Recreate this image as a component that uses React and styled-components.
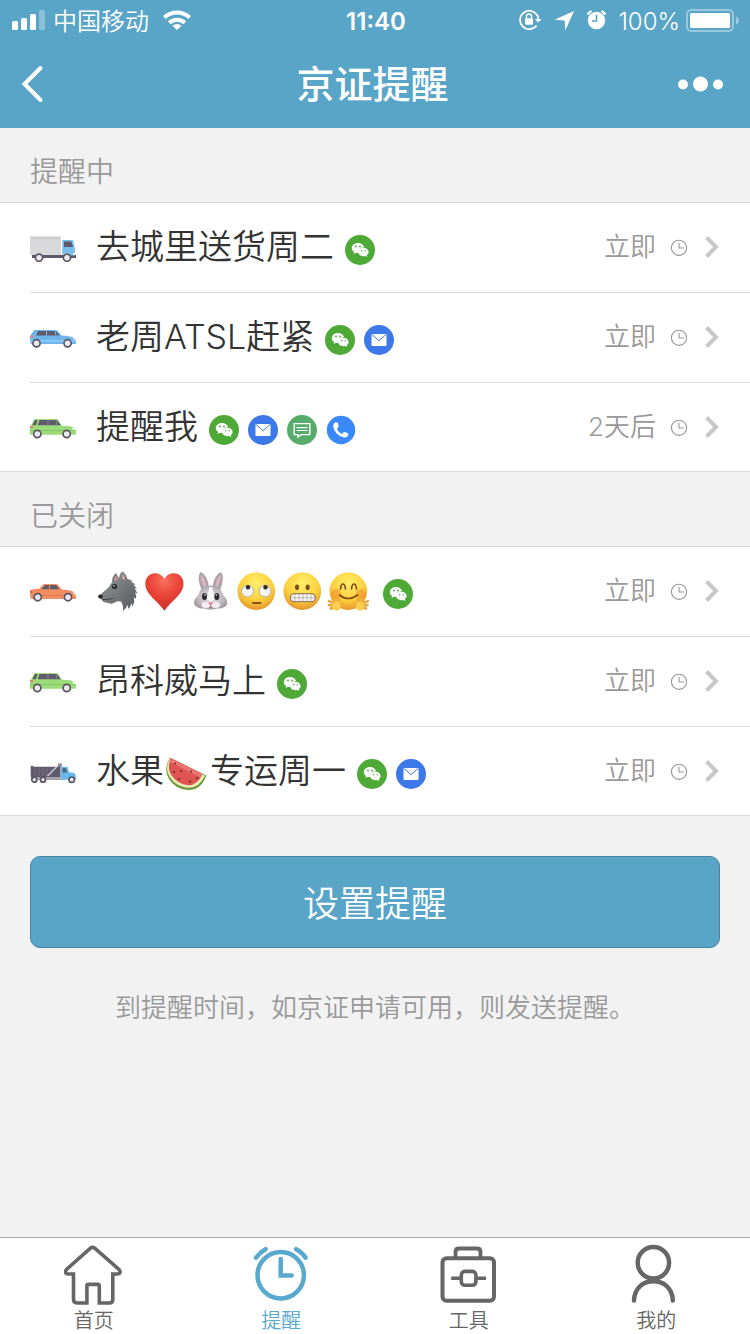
import React from 'react';
import styled, { createGlobalStyle } from 'styled-components';

const reminders = [
  {
    title: '提醒中',
    items: [
      { vehicle: 'van', name: ['去城里送货周二'], channels: ['wechat'], when: '立即' },
      { vehicle: 'blueCar', name: ['老周ATSL赶紧'], channels: ['wechat', 'mail'], when: '立即' },
      { vehicle: 'greenCar', name: ['提醒我'], channels: ['wechat', 'mail', 'sms', 'phone'], when: '2天后' },
    ],
  },
  {
    title: '已关闭',
    items: [
      {
        vehicle: 'orangeCar',
        name: [':wolf', ':heart', ':rabbit', ':rolling', ':grimace', ':hug'],
        channels: ['wechat'],
        when: '立即',
      },
      { vehicle: 'greenCar', name: ['昂科威马上'], channels: ['wechat'], when: '立即' },
      { vehicle: 'dumpTruck', name: ['水果', ':melon', '专运周一'], channels: ['wechat', 'mail'], when: '立即' },
    ],
  },
];

const App = () => {
  return (
    <Page>
      <GlobalStyle />
      <Header>
        <StatusBar />
        <NavBar>
          <NavButton aria-label="返回">
            <svg width="24" height="40" viewBox="0 0 24 40">
              <path d="M19.500 4L3.500 20l16 16" fill="none" stroke="#fff" strokeWidth="4" strokeLinecap="round" />
            </svg>
          </NavButton>
          <NavTitle>京证提醒</NavTitle>
          <NavButton aria-label="更多">
            <svg width="46" height="16" viewBox="0 0 46 16" fill="#fff">
              <circle cx="5" cy="8.500" r="5" />
              <circle cx="22.500" cy="8" r="7.500" />
              <circle cx="40" cy="8.500" r="5" />
            </svg>
          </NavButton>
        </NavBar>
      </Header>

      <Main>
        {reminders.map((group) => (
          <section key={group.title}>
            <GroupTitle>{group.title}</GroupTitle>
            <List>
              {group.items.map((item, index) => (
                <ReminderRow key={index} {...item} />
              ))}
            </List>
          </section>
        ))}
        <SubmitButton>设置提醒</SubmitButton>
        <Note>到提醒时间，如京证申请可用，则发送提醒。</Note>
      </Main>

      <TabBar>
        {tabs.map(({ label, icon, active }) => (
          <TabLink key={label} href="#" $active={active}>
            <svg width="60" height="62" viewBox="0 0 60 62" fill="none" stroke="currentColor" strokeWidth="4.500">
              {icon}
            </svg>
            {label}
          </TabLink>
        ))}
      </TabBar>
    </Page>
  );
};

export default App;

const ReminderRow = ({ vehicle, name, channels, when }) => (
  <Row>
    <svg width="46" height="30" viewBox="0 -1 46 30">{vehicles[vehicle]}</svg>
    <Name>
      {name.map((part, index) =>
        part.startsWith(':') ? (
          <Emoji key={index} viewBox="0 0 42 42">{emojis[part.slice(1)]}</Emoji>
        ) : (
          <span key={index}>{part}</span>
        )
      )}
    </Name>
    <Channels>
      {channels.map((channel) => (
        <svg key={channel} width="30" height="30" viewBox="0 0 30 30">{channelIcons[channel]}</svg>
      ))}
    </Channels>
    <When>{when}</When>
    <svg width="18" height="18" viewBox="0 0 18 18" fill="none" stroke="#999" strokeWidth="1.100">
      <circle cx="9" cy="9.800" r="7.600" />
      <path d="M9 5v5h5" />
    </svg>
    <Chevron width="16" height="24" viewBox="0 0 16 24" fill="none" stroke="#c7c7cc" strokeWidth="4">
      <path d="M2.500 2.500L12 12l-9.500 9.500" />
    </Chevron>
  </Row>
);

const StatusBar = () => (
  <StatusRow>
    <StatusSide>
      <svg width="34" height="20" viewBox="0 0 34 20" fill="#fff">
        <rect x="0" y="11" width="6" height="9" rx="1.500" />
        <rect x="9" y="8" width="6" height="12" rx="1.500" />
        <rect x="18" y="4" width="6" height="16" rx="1.500" />
        <rect x="27" y="0" width="6" height="20" rx="1.500" opacity="0.300" />
      </svg>
      <StatusText>中国移动</StatusText>
      <Wifi width="28" height="20" viewBox="0 0 28 20" fill="none" stroke="#fff" strokeWidth="4">
        <path d="M1.300 7.500a18.500 18.500 0 0 1 25.400 0" />
        <path d="M6.200 12.700a11.500 11.500 0 0 1 15.600 0" />
        <path d="M14 20l-4.600-4.300q4.600-3.600 9.200 0z" fill="#fff" stroke="none" />
      </Wifi>
    </StatusSide>
    <Clock>11:40</Clock>
    <StatusSide $end>
      <svg width="88" height="22" viewBox="0 0 88 22">
        <g fill="none" stroke="#fff" strokeWidth="1.700">
          <path d="M18.800 7.500A9.200 9.200 0 1 0 17.600 16.500" />
          <path d="M18.600 6.500q.7 1.800.7 4" />
          <path d="M7.400 10V7.700a2.600 2.600 0 0 1 5.200 0V10" strokeWidth="1.500" />
        </g>
        <path d="M15.800 10h6.800l-3.400 3.600z" fill="#fff" />
        <rect x="6" y="9.300" width="8" height="6.500" rx="1" fill="#fff" />
        <path d="M55 2L46.300 21.500 45.600 11.500 35.500 10.800z" fill="#fff" />
        <circle cx="77.500" cy="11.500" r="8.700" fill="#fff" />
        <path d="M68.500 5.500A12 12 0 0 1 72.500 2M82.500 2a12 12 0 0 1 4 3.500" stroke="#fff" strokeWidth="2.400" fill="none" />
        <path d="M77.500 6v6H73" fill="none" stroke="#58a5c8" strokeWidth="1.600" />
      </svg>
      <Battery>
        <StatusText>100%</StatusText>
        <svg width="54" height="24" viewBox="0 0 54 24">
          <rect x="1" y="2" width="46" height="21" rx="4.500" fill="none" stroke="#fff" strokeWidth="2" opacity="0.400" />
          <rect x="4" y="5" width="40" height="15" rx="1.500" fill="#fff" />
          <path d="M50 8.500q3 1 3 4t-3 4z" fill="#fff" opacity="0.400" />
        </svg>
      </Battery>
    </StatusSide>
  </StatusRow>
);

const Wheel = ({ x, y, r = 3.6 }) => (
  <circle cx={x} cy={y} r={r} fill="#eceaf0" stroke="#5b5564" strokeWidth="1.700" />
);

const vehicles = {
  van: (
    <>
      <rect y="3" width="31" height="19" fill="#d9d8da" />
      <path d="M2 5.500h27" stroke="#c4c3c6" />
      <path d="M2 22h44v3H2z" fill="#5f586a" />
      <path d="M32.300 7H42q1 0 1.300 1L45 16v6.500h-4a5 5 0 0 0-8.700 0z" fill="#79bdeb" />
      <path d="M34 8.500h7.200L43 14H34z" fill="#5f586a" />
      <path d="M43 20h2.500v2H43z" fill="#eaf5fd" />
      <Wheel x={9} y={24.7} />
      <Wheel x={37} y={24.7} />
    </>
  ),
  blueCar: (
    <>
      <path d="M0 13L4.300 7h21q2 0 3.200 1.800L31.500 12.500q10 .5 13 2.500 1.500 1 1.500 6H1.500Q0 20 0 17z" fill="#6fb5ea" />
      <path d="M6 12.500L8 8h17q1.500 0 4.500 4.500z" fill="#5f5a6c" />
      <path d="M16.500 8v4.500M25 8l1 4.500" stroke="#79bdeb" />
      <path d="M0 18h46" stroke="#8fd0f7" strokeWidth="1.500" />
      <path d="M0 12.500h3v2H0z" fill="#ef7d73" />
      <path d="M42 15h3l.5 2z" fill="#eaf5fd" />
      <Wheel x={6.5} y={20.3} />
      <Wheel x={37.6} y={20.3} />
    </>
  ),
  greenCar: (
    <>
      <path d="M0 14.500L4 6.500q.5-.5 1.500-.5h21q1 0 1.700 1L32 12.800q9 0 12 1.700 2 1 2 7.200H0z" fill="#9bdb79" />
      <path d="M2.300 12.300L5 7h2.500l-1.500 5.300zM7.700 12.300L9.500 7H27l3.700 5.300z" fill="#5f5a6c" />
      <path d="M18 7v5.300M26 7l1 5.300" stroke="#8b8794" />
      <path d="M0 17.500h46" stroke="#80c663" />
      <path d="M0 13h3v2H0z" fill="#ef7d73" />
      <path d="M42 14.500h3l1 2.500h-3z" fill="#eefbe8" />
      <Wheel x={7.3} y={21} />
      <Wheel x={36.7} y={21} />
    </>
  ),
  orangeCar: (
    <>
      <path d="M0 13q5-1.200 9-1.200L13 7.500q.7-.5 1.500-.5H26q1.200 0 2 1l4 4.500q8 .3 12 2.500 2 1 2 7H1q-1-1-1-9z" fill="#f38e63" />
      <path d="M11.500 12.300L15 8h10.500q1 0 4 4.300z" fill="#5f5a6c" />
      <path d="M19.500 8v4.300" stroke="#f38e63" />
      <path d="M12 18.500h21" stroke="#dd7950" />
      <path d="M0 14h2.500v2H0z" fill="#e65c50" />
      <path d="M43 15h2l.7 2.500H44z" fill="#fff0e2" />
      <Wheel x={7.7} y={20.2} />
      <Wheel x={38} y={20.2} />
    </>
  ),
  dumpTruck: (
    <>
      <path d="M.7 8.700h2l1 1H28l2-3h2V20H.7z" fill="#5f5a6c" />
      <path d="M5 11v8M9 11v8M13 11v8M17 11v8M21 11v8" stroke="#77727f" />
      <path d="M1 20h32v3H1z" fill="#a5a2aa" />
      <path d="M17.500 19L29 7.500h2V22" stroke="#d0ced3" strokeWidth="1.300" fill="none" />
      <path d="M28 7.500h3.500" stroke="#86828e" strokeWidth="1.700" />
      <path d="M31 9.700h6.500l1.500 5.500q5 .3 6 1.500 1 1 1 6H31z" fill="#69b8ec" />
      <path d="M32.500 11H36l1.200 4.500h-4.700z" fill="#51677f" />
      <Wheel x={4.3} y={22.7} r={2.5} />
      <Wheel x={13} y={22.7} r={2.5} />
      <Wheel x={41.7} y={22.7} r={2.7} />
    </>
  ),
};

const channelIcons = {
  wechat: (
    <>
      <circle cx="15" cy="15" r="15" fill="#4ea936" />
      <path d="M13 8c-3.500 0-6.200 2.200-6.200 5 0 1.600.9 3 2.300 3.900L8.500 19l2.500-1.200q1.200.4 2.600.3-.6-5 5.500-6C18.500 9.700 16 8 13 8z" fill="#fff" />
      <path d="M18.400 12.700c-3 0-5.200 1.900-5.200 4.300s2.300 4.200 5.200 4.200q1 0 1.900-.3l2 1-.5-1.700c1.100-.8 1.800-1.900 1.800-3.200 0-2.400-2.300-4.300-5.200-4.300z" fill="#fff" />
      <g fill="#4ea936">
        <circle cx="11" cy="11.500" r=".9" />
        <circle cx="15" cy="11.500" r=".9" />
        <circle cx="16.700" cy="15.700" r=".7" />
        <circle cx="20.200" cy="15.700" r=".7" />
      </g>
    </>
  ),
  mail: (
    <>
      <circle cx="15" cy="15" r="15" fill="#3c78e8" />
      <rect x="7.500" y="9" width="15" height="12" rx=".7" fill="#fff" />
      <path d="M8 9.500l7 6.200 7-6.200" fill="none" stroke="#3c78e8" strokeWidth="1" />
    </>
  ),
  sms: (
    <>
      <circle cx="15" cy="15" r="15" fill="#57ac6b" />
      <path d="M7.200 8.600h15.600v11h-8.500L11 22v-2.400H7.200z" fill="none" stroke="#fff" strokeWidth="1.400" />
      <path d="M9.500 12.700h11M9.500 15.500h11" stroke="#fff" strokeWidth="1.200" />
    </>
  ),
  phone: (
    <>
      <circle cx="15" cy="15" r="14.200" fill="#3b89f8" />
      <path
        d="M9.500 7.300l1.700.2q.7.200.8 1l.6 2.700q0 .7-.5 1.200L10.800 14q1.500 3.200 5 5l1.500-1.600q.6-.5 1.300-.3l2.800.8q.8.300.9 1.200.1 1-.6 1.900-1.300 1.700-3.700 1.500-4-.5-7.300-4-3.200-3.400-3.500-7.300-.1-3 2.300-3.900z"
        fill="#fff"
      />
    </>
  ),
};

const Face = () => (
  <>
    <radialGradient id="face" cx=".5" cy=".3" r=".72">
      <stop offset="0" stopColor="#fff06a" />
      <stop offset=".6" stopColor="#fcd03e" />
      <stop offset="1" stopColor="#e2922a" />
    </radialGradient>
    <circle cx="21.300" cy="21.200" r="18.800" fill="url(#face)" />
  </>
);

const emojis = {
  wolf: (
    <>
      <linearGradient id="fur" x1="0" y1="0" x2="1" y2="1">
        <stop offset="0" stopColor="#9a9c9d" />
        <stop offset="1" stopColor="#54585a" />
      </linearGradient>
      <path d="M15 12Q15 6 19 3l5 9z" fill="#777a7b" />
      <path d="M17 11q0-4 2-5.500l3 5z" fill="#c99694" />
      <path
        d="M22 9q0-6 4-7.500Q29 4 30.500 9l5 1.500-1.500 1 4.500 3-2 .2 3.500 4-2.500-.7 3 5.500-2.500-1q2 3 .7 6.500L37 27q1 5-1.500 10l-1-4q-.5 3-3 6l-1-4q-1 3-4.500 6 .5-6-2-9.500-4-1-6 1-3 2-7 .5Q5 32 4.500 29.500L1.500 27q.5-2 3-3.500L12 17q2-6 10-8z"
        fill="url(#fur)"
      />
      <path d="M25 9q-.5-3 1.300-5Q28 6 28 10z" fill="#d3a29f" />
      <path d="M5 29.300q6 1.500 11-1.300" fill="none" stroke="#444" />
      <ellipse cx="3.500" cy="26.500" rx="2.400" ry="2" fill="#26282b" />
      <circle cx="17.500" cy="16.500" r="2.700" fill="#303336" />
      <circle cx="17" cy="15.800" r=".8" fill="#ddd" />
    </>
  ),
  heart: (
    <>
      <radialGradient id="heart" cx=".5" cy=".2" r=".8">
        <stop offset="0" stopColor="#f8705c" />
        <stop offset=".5" stopColor="#ea4437" />
        <stop offset="1" stopColor="#c92d27" />
      </radialGradient>
      <path d="M21.500 9C24 4 28 3.200 31 3.200c5.500 0 9.500 4.500 9.500 10.300 0 11-12 17-19 27.300C14.500 30.500 2.300 24.500 2.300 13.500 2.300 7.700 6.500 3.200 12 3.200c4 0 7.500 2 9.500 5.800z" fill="url(#heart)" />
    </>
  ),
  rabbit: (
    <>
      <radialGradient id="rabbit" cx=".5" cy=".5" r=".6">
        <stop offset="0" stopColor="#e9e4e8" />
        <stop offset=".6" stopColor="#c2bbc1" />
        <stop offset="1" stopColor="#978f97" />
      </radialGradient>
      <path d="M13 21Q7 7 11.500 2 19 5 20 19zM30.500 21Q36.500 7 32 2q-7.500 3-8.500 17z" fill="#aaa2a9" />
      <path d="M15.500 18Q10.500 9 12 4.500q4.500 4 5.500 13zM28 18Q33 9 31.500 4.500q-4.500 4-5.500 13z" fill="#dcb5b8" />
      <path d="M21.700 15.500c7 0 10.500 3.500 11.500 7.500 1 3.500 5 5 5 9.500 0 4.500-6 6.500-10.500 6q-6 2.500-12 0C11 39 5 37 5 32.500c0-4.500 4.200-6 5.200-9.500 1-4 4.500-7.500 11.500-7.500z" fill="url(#rabbit)" />
      <path d="M20.300 17h3l2.500 12-4 3-4-3z" fill="#f8f5f7" />
      <ellipse cx="17" cy="35" rx="4.500" ry="3" fill="#f1edf0" />
      <ellipse cx="26.500" cy="35" rx="4.500" ry="3" fill="#f1edf0" />
      <ellipse cx="15.500" cy="26.500" rx="2.500" ry="3.500" fill="#292a2d" />
      <ellipse cx="27.800" cy="26.500" rx="2.500" ry="3.500" fill="#292a2d" />
      <circle cx="16" cy="25" r=".8" fill="#fff" />
      <circle cx="27.300" cy="25" r=".8" fill="#fff" />
      <path d="M19 32.500h5.500l-2.700 3z" fill="#dc8490" />
      <path d="M21.700 35v2m-2 1q2-2 4 0" fill="none" stroke="#a26d77" />
    </>
  ),
  rolling: (
    <>
      <Face />
      <circle cx="12.500" cy="21" r="5.900" fill="#f5f5f5" stroke="#a7a49c" strokeWidth=".8" />
      <circle cx="30" cy="21" r="5.900" fill="#f5f5f5" stroke="#a7a49c" strokeWidth=".8" />
      <circle cx="13" cy="17.300" r="2.200" fill="#36291f" />
      <circle cx="30.500" cy="17.300" r="2.200" fill="#36291f" />
      <path d="M18 33h7.500" stroke="#8a5218" strokeWidth="2" strokeLinecap="round" />
    </>
  ),
  grimace: (
    <>
      <Face />
      <ellipse cx="16" cy="17.200" rx="2" ry="2.800" fill="#7d4c16" />
      <ellipse cx="26.700" cy="17.200" rx="2" ry="2.800" fill="#7d4c16" />
      <rect x="9.300" y="23.700" width="25" height="8" rx="3.500" fill="#f7f7f5" stroke="#85624a" />
      <path d="M10 27.700h24M14 24v7.500M18 24v7.500M22 24v7.500M26 24v7.500M30 24v7.500" stroke="#a5a3a0" strokeWidth=".7" />
    </>
  ),
  hug: (
    <>
      <Face />
      <circle cx="9" cy="24" r="5" fill="#f17c2d" opacity=".45" />
      <circle cx="34" cy="24" r="5" fill="#f17c2d" opacity=".45" />
      <path d="M13.500 19q.5-5 2.500-5t2.500 5M24.500 19q.5-5 2.500-5t2.500 5M12.500 25q8.500 7 18 0" fill="none" stroke="#834c16" strokeWidth="1.700" strokeLinecap="round" />
      <g fill="none" stroke="#eaa13a" strokeWidth="2.300" strokeLinecap="round">
        <path d="M1.700 31l6 3M2 35l5 1M3.500 38.500l5-1M11.500 29.500l-1 5" />
        <path d="M41 31l-6 3M40.500 35l-5 1M39 38.500l-5-1M31 29.500l1 5" />
      </g>
      <ellipse cx="9.500" cy="36" rx="4.300" ry="4.700" fill="#f9cd50" />
      <ellipse cx="33" cy="36" rx="4.300" ry="4.700" fill="#f9cd50" />
    </>
  ),
  melon: (
    <>
      <path d="M5 7.500Q-2 19 4 29q6 10 19 11 13 .5 18.300-14.500z" fill="#6c9938" />
      <path d="M5 8Q-1 19 5 27.500q6 9 18 10.200 11 .5 17-12z" fill="#e8edb8" />
      <path d="M5.700 8Q1.500 19 7 26q6 8 16 9.200 9.500.3 14.500-11.200z" fill="#df5350" />
      <path d="M5.700 8L37.500 24l-2 3.500L5 12z" fill="#ea7672" />
      <g fill="#572327">
        <circle cx="10" cy="13.500" r=".9" />
        <circle cx="16" cy="21" r=".9" />
        <circle cx="9" cy="22" r=".9" />
        <circle cx="14" cy="29" r=".9" />
        <circle cx="26" cy="21.500" r=".9" />
        <circle cx="25" cy="31.500" r=".9" />
        <circle cx="32" cy="28" r=".9" />
      </g>
    </>
  ),
};

const tabs = [
  {
    label: '首页',
    icon: (
      <path
        d="M26.500 4.200q2-1.800 4.200 0L55 25.500q3 4.200-2 4.500h-4.200v25.500q0 3.500-3.500 3.500H35.300V42q0-1.600-1.600-1.600h-9.200q-1.600 0-1.600 1.600v17H13.500q-4 0-4-3.500V30H4.500q-5-.3-2-4.500z"
        strokeWidth="3.600"
      />
    ),
  },
  {
    label: '提醒',
    active: true,
    icon: (
      <>
        <circle cx="29.700" cy="31.300" r="23.200" />
        <path d="M29.700 15v16.500h11M5 13.700q4-5.500 9.500-8.500M54.600 13.700Q51 8.200 45.200 5.200" strokeLinecap="round" />
      </>
    ),
  },
  {
    label: '工具',
    icon: (
      <>
        <rect x="3.500" y="14.200" width="51.500" height="42.500" rx="4" strokeWidth="4" />
        <path d="M16.500 14V8q0-3.500 3.500-3.500h18q3.500 0 3.500 3.500v6" strokeWidth="3.800" />
        <rect x="22.300" y="27.400" width="14.600" height="13.800" rx="3.500" strokeWidth="3.600" />
        <path d="M12.200 34.300h10M37 34.300h10" strokeWidth="3.600" />
      </>
    ),
  },
  {
    label: '我的',
    icon: (
      <>
        <circle cx="27.400" cy="18.700" r="15.700" />
        <path d="M8 56.500C8.500 43 18 37.300 27.400 37.300S46.300 43 46.800 56.500" strokeLinecap="round" />
      </>
    ),
  },
];

const GlobalStyle = createGlobalStyle`
  * {
    box-sizing: border-box;
  }

  body {
    margin: 0;
    background: #f2f2f2;
    color: #333;
    font-family: Inter, 'Noto Sans CJK SC', sans-serif;
    font-weight: 350;
  }

  svg {
    display: block;
    flex-shrink: 0;
  }
`;

const Page = styled.div`
  display: flex;
  flex-direction: column;
  min-height: 100vh;
`;

const Header = styled.header`
  background: #58a5c8;
  color: #fff;
`;

const StatusRow = styled.div`
  display: grid;
  grid-template-columns: 1fr auto 1fr;
  align-items: center;
  height: 40px;
  padding: 0 10px 0 12px;
  font-size: 24px;
  line-height: 36px;
`;

const StatusSide = styled.div`
  display: flex;
  align-items: center;
  gap: ${({ $end }) => ($end ? '11px' : '7px')};
  justify-content: ${({ $end }) => ($end ? 'flex-end' : 'flex-start')};
`;

const StatusText = styled.span`
  padding-top: 3px;
`;

const Wifi = styled.svg`
  margin-left: 7px;
`;

const Clock = styled.time`
  padding-top: 3px;
  font-weight: 600;
`;

const Battery = styled.span`
  display: flex;
  align-items: center;
  gap: 6px;
`;

const NavBar = styled.nav`
  display: flex;
  align-items: center;
  justify-content: space-between;
  height: 88px;
  padding: 0 26px 0 21px;
`;

const NavButton = styled.button`
  display: flex;
  width: 46px;
  padding: 0;
  border: none;
  background: none;
  cursor: pointer;
`;

const NavTitle = styled.h1`
  margin: 0;
  font-size: 38px;
  font-weight: 500;
  line-height: 48px;
`;

const Main = styled.main`
  flex: 1;
`;

const GroupTitle = styled.h2`
  margin: 0;
  padding: 24px 30px 10px;
  color: #999;
  font-size: 28px;
  font-weight: 350;
  line-height: 40px;
`;

const List = styled.ul`
  margin: 0;
  padding: 0 0 0 30px;
  border: solid #d9d9d9;
  border-width: 1px 0;
  background: #fff;
  list-style: none;
`;

const Row = styled.li`
  display: flex;
  align-items: center;
  height: 89px;
  padding: 0 30px 1px 0;

  & + & {
    height: 90px;
    border-top: 1px solid #d9d9d9;
  }

  &:last-child {
    height: 89px;
    padding-bottom: 0;
  }
`;

const Name = styled.span`
  display: flex;
  align-items: center;
  margin-left: 20px;
  font-size: 34px;
  line-height: 48px;
`;

const Emoji = styled.svg`
  width: 42px;
  height: 42px;
  margin: 0 3px 0 1px;
`;

const Channels = styled.span`
  display: flex;
  gap: 9px;
  margin-left: 11px;
  padding-top: 6px;
`;

const When = styled.span`
  margin-left: auto;
  margin-right: 14px;
  color: #999;
  font-size: 26px;
  line-height: 40px;
`;

const Chevron = styled.svg`
  margin-left: 16px;
`;

const SubmitButton = styled.button`
  display: block;
  width: calc(100% - 60px);
  height: 92px;
  margin: 40px 30px;
  padding: 0 0 3px;
  border: 1px solid #4684a0;
  border-radius: 10px;
  background: #58a5c8;
  color: #fff;
  font: inherit;
  font-size: 36px;
  cursor: pointer;
`;

const Note = styled.p`
  margin: 0;
  color: #999;
  font-size: 26px;
  line-height: 40px;
  text-align: center;
`;

const TabBar = styled.nav`
  display: flex;
  border-top: 1px solid #a9a9a9;
  background: #fff;
`;

const TabLink = styled.a`
  display: flex;
  flex: 1;
  flex-direction: column;
  align-items: center;
  gap: 2px;
  padding-top: 6px;
  color: ${({ $active }) => ($active ? '#58a9cd' : '#666')};
  font-size: 20px;
  line-height: 26px;
  text-decoration: none;
`;
